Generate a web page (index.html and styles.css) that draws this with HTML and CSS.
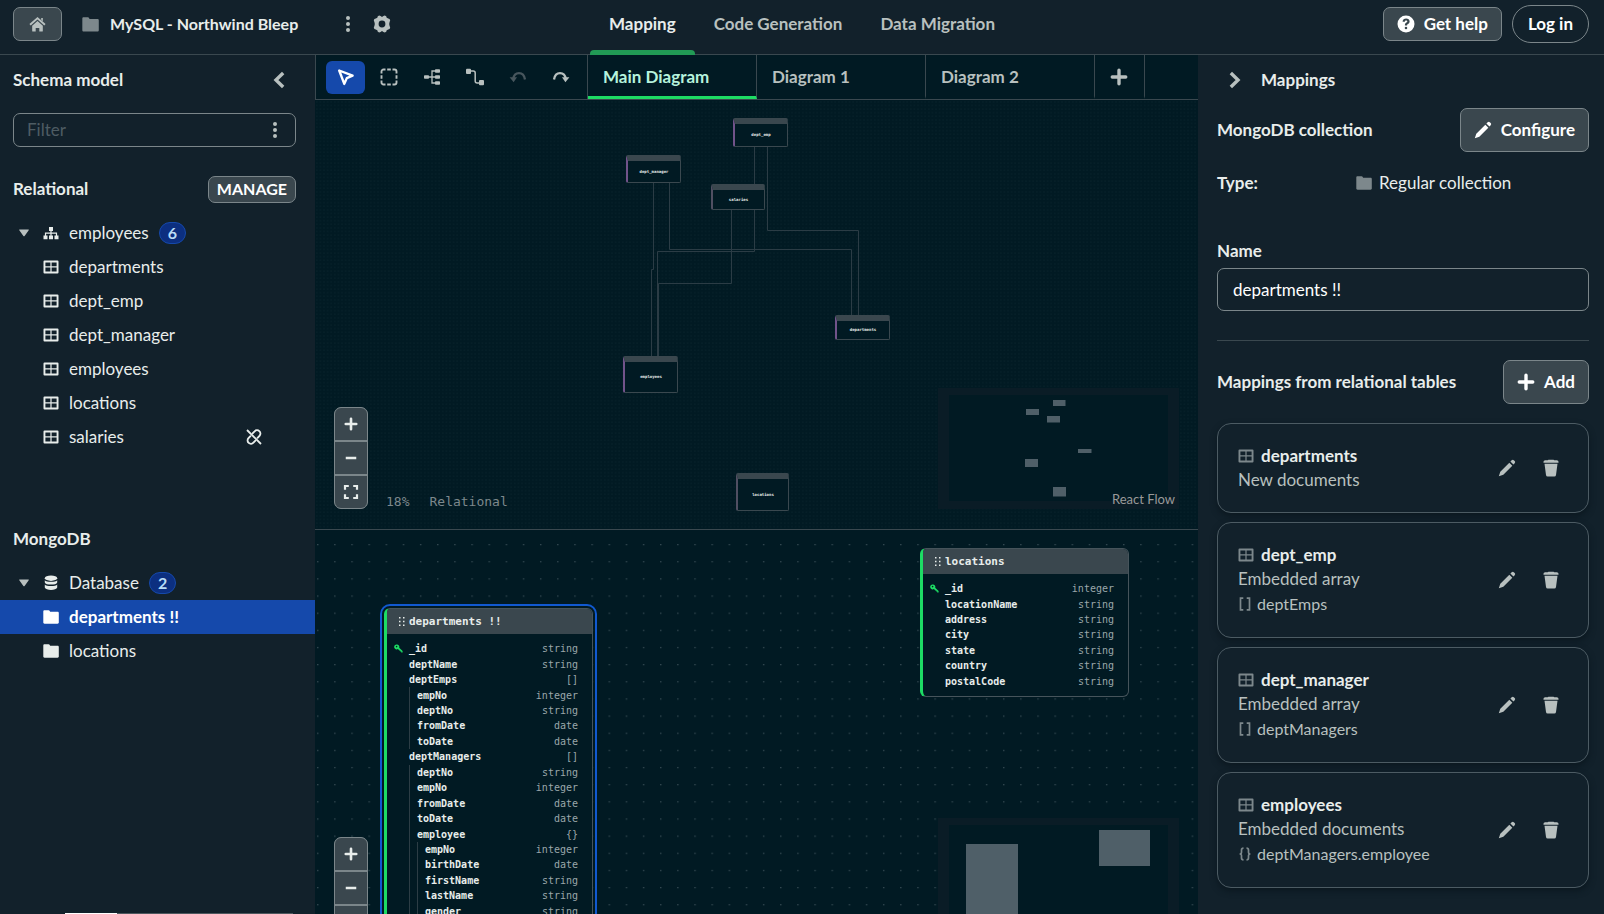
FILE: index.html
```html
<!DOCTYPE html>
<html lang="en">
<head>
<meta charset="utf-8">
<meta name="viewport" content="width=device-width, initial-scale=1">
<title>MySQL - Northwind Bleep</title>
<link rel="stylesheet" href="styles.css">
</head>
<body>
<svg class="sprite" aria-hidden="true">
  <symbol id="i-home" viewBox="0 0 16 16"><path d="M8 .9 15.6 7.6 14.4 9 8 3.4 1.6 9 .4 7.6z"/><path d="M8 4.8 13 9.1V14a.7.7 0 0 1-.7.7H9.7v-3.4H6.3v3.4H3.7A.7.7 0 0 1 3 14V9.100z"/><path d="M11.500 1.800H13V5L11.500 3.700z"/></symbol>
  <symbol id="i-folder" viewBox="0 0 16 14"><path d="M.3 1.400C.3.700.8.200 1.500.200H5.600c.5 0 .8.200 1 .6l.5 1H14.600c.7 0 1.200.500 1.200 1.200v9.500c0 .7-.5 1.200-1.200 1.200H1.500c-.7 0-1.200-.5-1.200-1.200z"/></symbol>
  <symbol id="i-kebab" viewBox="0 0 16 16"><circle cx="8" cy="2" r="2"/><circle cx="8" cy="8" r="2"/><circle cx="8" cy="14" r="2"/></symbol>
  <symbol id="i-gear" viewBox="0 0 18 18"><path fill-rule="evenodd" d="M6.200.5 7.600.9 9 1.900 10.400.9 11.800.5 13.200 1.200 13.700 2.800 15.200 3.500 16.600 4 17.200 5.500 16.600 7 16.200 9 16.600 11 17.200 12.500 16.600 14 15.200 14.500 13.700 15.200 13.200 16.800 11.800 17.500 10.400 17.100 9 16.100 7.600 17.100 6.200 17.500 4.800 16.800 4.300 15.200 2.800 14.500 1.400 14 .8 12.500 1.400 11 1.800 9 1.400 7 .8 5.500 1.400 4 2.800 3.500 4.300 2.800 4.800 1.200zM9 5.600a3.400 3.400 0 1 0 0 6.800 3.400 3.400 0 0 0 0-6.800z"/></symbol>
  <symbol id="i-help" viewBox="0 0 18 18"><path fill-rule="evenodd" d="M9 .5a8.500 8.500 0 1 0 0 17 8.500 8.500 0 0 0 0-17zM5.600 6.700C5.700 4.600 7.200 3.500 9.100 3.500c2 0 3.500 1.100 3.500 2.900 0 1.300-.7 2-1.500 2.500-.8.500-1 .7-1 1.300v.4H7.900v-.6c0-1.300.6-2 1.500-2.500.7-.4.9-.6.9-1.100S9.800 5.500 9.100 5.500c-.8 0-1.200.5-1.300 1.200zM9 11.700a1.300 1.300 0 1 1 0 2.600 1.300 1.300 0 0 1 0-2.600z"/></symbol>
  <symbol id="i-left" viewBox="0 0 16 16"><path d="M11.700 1.800 5.300 8l6.400 6.200" fill="none" stroke="currentColor" stroke-width="3"/></symbol>
  <symbol id="i-right" viewBox="0 0 16 16"><path d="M4.300 1.800 10.700 8l-6.400 6.200" fill="none" stroke="currentColor" stroke-width="3"/></symbol>
  <symbol id="i-caret" viewBox="0 0 10 8"><path d="M.4.600H9.600Q10 .8 9.700 1.200L5.600 6.900Q5 7.500 4.400 6.900L.3 1.200Q0 .8.4.600z"/></symbol>
  <symbol id="i-tree" viewBox="0 0 16 16"><path d="M6 2h4v4H6zM.5 10.500h4v3.700h-4zM6 10.500h4v3.700H6zM11.500 10.500h4v3.700h-4z"/><path d="M8 5v6M2.500 11V8.200h11V11" fill="none" stroke="currentColor" stroke-width="1.200"/></symbol>
  <symbol id="i-table" viewBox="0 0 16 14"><path fill-rule="evenodd" d="M1.500.500h13a1 1 0 0 1 1 1v11a1 1 0 0 1-1 1h-13a1 1 0 0 1-1-1v-11a1 1 0 0 1 1-1zM2.400 2.400v3.900h5V2.400zM8.600 2.400v3.900h5V2.400zM2.400 7.500v4h5v-4zM8.600 7.500v4h5v-4z"/></symbol>
  <symbol id="i-db" viewBox="0 0 14 16"><ellipse cx="7" cy="3.200" rx="6.200" ry="2.700"/><path d="M.8 5.200C2 7.200 12 7.200 13.200 5.200V7.400C12.500 10.300 1.500 10.300.8 7.400zM.8 9.400c1.200 2 11.200 2 12.400 0v3.200C12.500 15.800 1.500 15.800.8 12.600z"/></symbol>
  <symbol id="i-unlink" viewBox="0 0 16 16"><g fill="none" stroke="currentColor" stroke-width="1.900" stroke-linecap="round"><path d="M6.600 4.300 8.600 2.300a3.200 3.200 0 0 1 4.900 4.500L11.600 8.800"/><path d="M9.400 11.700 7.400 13.700a3.200 3.200 0 0 1-4.900-4.500L4.400 7.200"/></g><path d="M1 1 15 15" stroke="currentColor" stroke-width="1.800"/></symbol>
  <symbol id="i-cursor" viewBox="0 0 18 18"><path d="M2.200 2.500 15.600 7.600 9.800 10.100 7.300 15.900z" fill="none" stroke="currentColor" stroke-width="2.400" stroke-linejoin="round"/></symbol>
  <symbol id="i-marquee" viewBox="0 0 18 18"><path d="M1.500 5.500V3.500a2 2 0 0 1 2-2h2M12.500 1.500h2a2 2 0 0 1 2 2v2M16.500 12.500v2a2 2 0 0 1-2 2h-2M5.500 16.500h-2a2 2 0 0 1-2-2v-2M7.200 1.500h3.600M7.200 16.500h3.600M1.500 7.200v3.600M16.500 7.200v3.600" fill="none" stroke="currentColor" stroke-width="1.900"/></symbol>
  <symbol id="i-layout" viewBox="0 0 18 18"><rect x="1" y="7.200" width="5" height="3.600" rx=".8"/><rect x="12" y="1.200" width="5" height="3.600" rx=".8"/><rect x="12" y="7.200" width="5" height="3.600" rx=".8"/><rect x="12" y="13.200" width="5" height="3.600" rx=".8"/><path d="M6 9h6M12.500 3H9v12h3.500" fill="none" stroke="currentColor" stroke-width="1.300"/></symbol>
  <symbol id="i-route" viewBox="0 0 20 18"><rect x="1" y=".8" width="5" height="5.200" rx="1"/><rect x="14" y="12" width="5" height="5.200" rx="1"/><path d="M6 3h2.200a2 2 0 0 1 2 2v8a2 2 0 0 0 2 2H15" fill="none" stroke="currentColor" stroke-width="1.500"/></symbol>
  <symbol id="i-undo" viewBox="0 0 18 12"><path d="M4 8.500C4.700 4.200 7 2.200 10 2.200c3.300 0 5.300 2.200 6 6.300" fill="none" stroke="currentColor" stroke-width="2.300"/><path d="M.6 6.200H8L4.600 11.200z"/></symbol>
  <symbol id="i-plus" viewBox="0 0 16 16"><path d="M8 2v12M2 8h12" fill="none" stroke="currentColor" stroke-width="3" stroke-linecap="round"/></symbol>
  <symbol id="i-minus" viewBox="0 0 16 16"><path d="M2 8h12" fill="none" stroke="currentColor" stroke-width="3"/></symbol>
  <symbol id="i-fit" viewBox="0 0 16 16"><path d="M2 5.800V2h3.800M10.200 2H14v3.800M14 10.200V14h-3.800M5.800 14H2v-3.800" fill="none" stroke="currentColor" stroke-width="2.200"/></symbol>
  <symbol id="i-edit" viewBox="0 0 18 18"><path d="M11.300 3.700 14.300 6.700 5.300 15.700.8 17.200 2.300 12.700z"/><path d="M12.400 2.600 13.700 1.300Q14.900.300 16 1.400L16.700 2.100Q17.700 3.200 16.700 4.300L15.400 5.600z"/></symbol>
  <symbol id="i-trash" viewBox="0 0 16 18"><path d="M5.500.700h5q.6 0 .8.500h2.500q1.700 0 1.700 1.600V3.700H.5V2.800Q.5 1.200 2.200 1.200H4.700Q4.900.700 5.500.700zM1.500 4.800H14.500L13 15.900q-.2 1.500-1.700 1.500H4.700Q3.200 17.400 3 15.900z"/></symbol>
  <symbol id="i-grip" viewBox="0 0 6 10"><path d="M0 0h1.500v1.500H0zM4 0h1.500v1.500H4zM0 3.800h1.500v1.500H0zM4 3.800h1.500v1.500H4zM0 7.600h1.500v1.500H0zM4 7.600h1.500v1.500H4z"/></symbol>
  <symbol id="i-key" viewBox="0 0 9 9"><path fill-rule="evenodd" d="M2.900.500a2.400 2.400 0 0 1 2.300 3.200L8.600 6.900V8.500H7.200V7.500H6.200V6.500H5.200L4 5.100A2.500 2.500 0 1 1 2.900.500zM2.600 1.800a.8.800 0 1 0 0 1.600.8.800 0 0 0 0-1.600z"/></symbol>
  <symbol id="i-array" viewBox="0 0 12 14"><path d="M4.300 1.200H1.500v11.600h2.800M7.700 1.200h2.800v11.600H7.700" fill="none" stroke="currentColor" stroke-width="1.700"/></symbol>
  <symbol id="i-object" viewBox="0 0 12 14"><path d="M4.500 1.200Q2.500 1.200 2.500 3V5.300Q2.500 7 .6 7 2.500 7 2.500 8.700V11q0 1.800 2 1.800M7.500 1.200q2 0 2 1.800V5.300Q9.500 7 11.400 7 9.500 7 9.500 8.700V11q0 1.800-2 1.800" fill="none" stroke="currentColor" stroke-width="1.700"/></symbol>
</svg>

<div class="app">
  <header class="topbar">
    <div class="project">
      <button class="btn home" type="button" aria-label="Home"><svg class="i17"><use href="#i-home"/></svg></button>
      <svg class="i17 muted"><use href="#i-folder"/></svg>
      <h1 class="project-name">MySQL - Northwind Bleep</h1>
      <button class="icon-btn more" type="button" aria-label="Project menu"><svg class="i16"><use href="#i-kebab"/></svg></button>
      <button class="icon-btn" type="button" aria-label="Settings"><svg class="i18"><use href="#i-gear"/></svg></button>
    </div>
    <nav class="sections">
      <a class="section current" href="#mapping">Mapping</a>
      <a class="section" href="#code">Code Generation</a>
      <a class="section" href="#migration">Data Migration</a>
    </nav>
    <div class="account">
      <button class="btn help" type="button"><svg class="i18"><use href="#i-help"/></svg>Get help</button>
      <button class="btn login" type="button">Log in</button>
    </div>
  </header>

  <aside class="schema">
    <div class="schema-head">
      <h2 class="heading">Schema model</h2>
      <button class="icon-btn" type="button" aria-label="Collapse schema model"><svg class="i18"><use href="#i-left"/></svg></button>
    </div>
    <div class="filter">
      <input class="filter-input" type="text" placeholder="Filter" aria-label="Filter">
      <button class="icon-btn" type="button" aria-label="Filter options"><svg class="i16"><use href="#i-kebab"/></svg></button>
    </div>
    <div class="group-head">
      <h2 class="heading">Relational</h2>
      <button class="btn manage" type="button">MANAGE</button>
    </div>
    <ul class="tree">
      <li class="item"><svg class="caret"><use href="#i-caret"/></svg><svg class="i16"><use href="#i-tree"/></svg>employees<span class="badge">6</span></li>
      <li class="item leaf"><svg class="i16"><use href="#i-table"/></svg>departments</li>
      <li class="item leaf"><svg class="i16"><use href="#i-table"/></svg>dept_emp</li>
      <li class="item leaf"><svg class="i16"><use href="#i-table"/></svg>dept_manager</li>
      <li class="item leaf"><svg class="i16"><use href="#i-table"/></svg>employees</li>
      <li class="item leaf"><svg class="i16"><use href="#i-table"/></svg>locations</li>
      <li class="item leaf"><svg class="i16"><use href="#i-table"/></svg>salaries<svg class="i16 unlinked"><use href="#i-unlink"/></svg></li>
    </ul>
    <div class="group-head mongo">
      <h2 class="heading">MongoDB</h2>
    </div>
    <ul class="tree">
      <li class="item"><svg class="caret"><use href="#i-caret"/></svg><svg class="i16"><use href="#i-db"/></svg>Database<span class="badge">2</span></li>
      <li class="item leaf selected"><svg class="i16"><use href="#i-folder"/></svg>departments !!</li>
      <li class="item leaf"><svg class="i16"><use href="#i-folder"/></svg>locations</li>
    </ul>
    <div class="scroll-track"><div class="scroll-thumb"></div></div>
  </aside>

  <main class="workspace">
    <div class="toolbar">
      <div class="tools">
        <button class="tool active" type="button" aria-label="Select"><svg class="i18"><use href="#i-cursor"/></svg></button>
        <button class="tool" type="button" aria-label="Area select"><svg class="i18"><use href="#i-marquee"/></svg></button>
        <button class="tool" type="button" aria-label="Auto layout"><svg class="i18"><use href="#i-layout"/></svg></button>
        <button class="tool" type="button" aria-label="Edge style"><svg class="i20"><use href="#i-route"/></svg></button>
        <button class="tool" type="button" aria-label="Undo" disabled><svg class="i18"><use href="#i-undo"/></svg></button>
        <button class="tool" type="button" aria-label="Redo"><svg class="i18 flip"><use href="#i-undo"/></svg></button>
      </div>
      <div class="tabs" role="tablist">
        <button class="tab on" type="button" role="tab" aria-selected="true">Main Diagram</button>
        <button class="tab" type="button" role="tab">Diagram 1</button>
        <button class="tab" type="button" role="tab">Diagram 2</button>
        <button class="tab add" type="button" aria-label="Add diagram"><svg class="i18"><use href="#i-plus"/></svg></button>
      </div>
    </div>

    <section class="canvas" aria-label="Relational diagram">
      <svg class="grid" aria-hidden="true">
        <defs><pattern id="fine" width="3.6" height="3.6" patternUnits="userSpaceOnUse"><circle cx="1.800" cy="1.800" r=".45" fill="#142f38"/></pattern></defs>
        <rect width="100%" height="100%" fill="url(#fine)"/>
        <g fill="none" stroke="#2b3c45" stroke-width="1">
          <path d="M439.500 46V151.500H342.500V257"/>
          <path d="M452.500 46V130.500H543.500V216"/>
          <path d="M338.500 83V169.500H336.500V257"/>
          <path d="M354.500 83V149.500H536.500V216"/>
          <path d="M416.500 110V183.500H343.500V257"/>
        </g>
      </svg>
      <div class="mini dept-emp"><span>dept_emp</span></div>
      <div class="mini dept-manager"><span>dept_manager</span></div>
      <div class="mini salaries"><span>salaries</span></div>
      <div class="mini departments"><span>departments</span></div>
      <div class="mini employees"><span>employees</span></div>
      <div class="mini locations"><span>locations</span></div>
      <div class="hud">
        <div class="zoomer">
          <button class="zoom" type="button" aria-label="Zoom in"><svg class="i14"><use href="#i-plus"/></svg></button>
          <button class="zoom" type="button" aria-label="Zoom out"><svg class="i14"><use href="#i-minus"/></svg></button>
          <button class="zoom" type="button" aria-label="Fit view"><svg class="i16"><use href="#i-fit"/></svg></button>
        </div>
        <p class="status"><span>18%</span><span>Relational</span></p>
        <div class="minimap">
          <svg class="map" viewBox="0 0 241 121" aria-hidden="true">
            <path fill="#0a1c26" fill-rule="evenodd" d="M0 0H241V121H0zM11 7V113H230V7z"/>
            <g fill="#4f5f68"><path d="M115 12h12.500v6H115zM88 21h13v6H88zM109 28h13v6.500H109zM140 61h13.500v4H140zM87 71h13v8H87zM115 99h13v9.500H115z"/></g>
          </svg>
          <a class="credit" href="#reactflow">React Flow</a>
        </div>
      </div>
    </section>

    <section class="canvas" aria-label="MongoDB diagram">
      <svg class="grid" aria-hidden="true">
        <defs><pattern id="wide" x="2" y="14" width="17.150" height="17.150" patternUnits="userSpaceOnUse"><circle cx=".8" cy=".6" r=".6" fill="#51636b"/></pattern></defs>
        <rect width="100%" height="100%" fill="url(#wide)"/>
      </svg>
      <div class="hud">
        <div class="zoomer">
          <button class="zoom" type="button" aria-label="Zoom in"><svg class="i14"><use href="#i-plus"/></svg></button>
          <button class="zoom" type="button" aria-label="Zoom out"><svg class="i14"><use href="#i-minus"/></svg></button>
          <button class="zoom" type="button" aria-label="Fit view"><svg class="i16"><use href="#i-fit"/></svg></button>
        </div>
        <div class="minimap">
          <svg class="map" viewBox="0 0 241 121" aria-hidden="true">
            <path fill="#0a1c26" fill-rule="evenodd" d="M0 0H241V121H0zM11 7V113H230V7z"/>
            <path fill="#4f5f68" d="M28 26h52v87H28zM161 12h51v36H161z"/>
          </svg>
        </div>
      </div>
      <article class="node node-departments picked">
        <h3 class="node-head"><svg class="grip"><use href="#i-grip"/></svg>departments !!</h3>
        <dl class="fields">
          <div class="field"><svg class="key"><use href="#i-key"/></svg><dt>_id</dt><dd>string</dd></div>
          <div class="field"><dt>deptName</dt><dd>string</dd></div>
          <div class="field"><dt>deptEmps</dt><dd>[]</dd></div>
          <div class="field"><i class="guide"></i><dt>empNo</dt><dd>integer</dd></div>
          <div class="field"><i class="guide"></i><dt>deptNo</dt><dd>string</dd></div>
          <div class="field"><i class="guide"></i><dt>fromDate</dt><dd>date</dd></div>
          <div class="field"><i class="guide"></i><dt>toDate</dt><dd>date</dd></div>
          <div class="field"><dt>deptManagers</dt><dd>[]</dd></div>
          <div class="field"><i class="guide"></i><dt>deptNo</dt><dd>string</dd></div>
          <div class="field"><i class="guide"></i><dt>empNo</dt><dd>integer</dd></div>
          <div class="field"><i class="guide"></i><dt>fromDate</dt><dd>date</dd></div>
          <div class="field"><i class="guide"></i><dt>toDate</dt><dd>date</dd></div>
          <div class="field"><i class="guide"></i><dt>employee</dt><dd>{}</dd></div>
          <div class="field"><i class="guide"></i><i class="guide"></i><dt>empNo</dt><dd>integer</dd></div>
          <div class="field"><i class="guide"></i><i class="guide"></i><dt>birthDate</dt><dd>date</dd></div>
          <div class="field"><i class="guide"></i><i class="guide"></i><dt>firstName</dt><dd>string</dd></div>
          <div class="field"><i class="guide"></i><i class="guide"></i><dt>lastName</dt><dd>string</dd></div>
          <div class="field"><i class="guide"></i><i class="guide"></i><dt>gender</dt><dd>string</dd></div>
        </dl>
      </article>
      <article class="node node-locations">
        <h3 class="node-head"><svg class="grip"><use href="#i-grip"/></svg>locations</h3>
        <dl class="fields">
          <div class="field"><svg class="key"><use href="#i-key"/></svg><dt>_id</dt><dd>integer</dd></div>
          <div class="field"><dt>locationName</dt><dd>string</dd></div>
          <div class="field"><dt>address</dt><dd>string</dd></div>
          <div class="field"><dt>city</dt><dd>string</dd></div>
          <div class="field"><dt>state</dt><dd>string</dd></div>
          <div class="field"><dt>country</dt><dd>string</dd></div>
          <div class="field"><dt>postalCode</dt><dd>string</dd></div>
        </dl>
      </article>
    </section>
  </main>

  <aside class="details">
    <div class="details-head">
      <button class="icon-btn" type="button" aria-label="Collapse mappings"><svg class="i18"><use href="#i-right"/></svg></button>
      <h2 class="heading">Mappings</h2>
    </div>
    <div class="line">
      <h3 class="heading">MongoDB collection</h3>
      <button class="btn action" type="button"><svg class="i18"><use href="#i-edit"/></svg>Configure</button>
    </div>
    <div class="type-row">
      <strong class="heading">Type:</strong>
      <span class="type-value"><svg class="i16 muted"><use href="#i-folder"/></svg>Regular collection</span>
    </div>
    <label class="heading name-label" for="name">Name</label>
    <input class="name-input" id="name" type="text" value="departments !!">
    <hr class="rule">
    <div class="line">
      <h3 class="heading">Mappings from relational tables</h3>
      <button class="btn action" type="button"><svg class="i18"><use href="#i-plus"/></svg>Add</button>
    </div>
    <div class="cards">
      <article class="card">
        <div class="card-text">
          <h4 class="card-name"><svg class="i16 muted"><use href="#i-table"/></svg>departments</h4>
          <p class="card-kind">New documents</p>
        </div>
        <button class="icon-btn" type="button" aria-label="Edit departments"><svg class="i18"><use href="#i-edit"/></svg></button>
        <button class="icon-btn" type="button" aria-label="Delete departments"><svg class="i18"><use href="#i-trash"/></svg></button>
      </article>
      <article class="card">
        <div class="card-text">
          <h4 class="card-name"><svg class="i16 muted"><use href="#i-table"/></svg>dept_emp</h4>
          <p class="card-kind">Embedded array</p>
          <p class="card-path"><svg class="i14 muted"><use href="#i-array"/></svg>deptEmps</p>
        </div>
        <button class="icon-btn" type="button" aria-label="Edit dept_emp"><svg class="i18"><use href="#i-edit"/></svg></button>
        <button class="icon-btn" type="button" aria-label="Delete dept_emp"><svg class="i18"><use href="#i-trash"/></svg></button>
      </article>
      <article class="card">
        <div class="card-text">
          <h4 class="card-name"><svg class="i16 muted"><use href="#i-table"/></svg>dept_manager</h4>
          <p class="card-kind">Embedded array</p>
          <p class="card-path"><svg class="i14 muted"><use href="#i-array"/></svg>deptManagers</p>
        </div>
        <button class="icon-btn" type="button" aria-label="Edit dept_manager"><svg class="i18"><use href="#i-edit"/></svg></button>
        <button class="icon-btn" type="button" aria-label="Delete dept_manager"><svg class="i18"><use href="#i-trash"/></svg></button>
      </article>
      <article class="card">
        <div class="card-text">
          <h4 class="card-name"><svg class="i16 muted"><use href="#i-table"/></svg>employees</h4>
          <p class="card-kind">Embedded documents</p>
          <p class="card-path"><svg class="i14 muted"><use href="#i-object"/></svg>deptManagers.employee</p>
        </div>
        <button class="icon-btn" type="button" aria-label="Edit employees"><svg class="i18"><use href="#i-edit"/></svg></button>
        <button class="icon-btn" type="button" aria-label="Delete employees"><svg class="i18"><use href="#i-trash"/></svg></button>
      </article>
    </div>
  </aside>
</div>
</body>
</html>
```

FILE: styles.css
```css
:root {
  --panel: #12212b;
  --canvas: #011a23;
  --line: #3a484f;
  --edge: #7b868a;
  --fill: #3a474e;
  --text: #e8edeb;
  --soft: #b8c0bf;
  --dim: #7d888c;
  --green: #1ddc64;
  --blue: #1549ab;
  --sans: Lato, "Noto Sans", sans-serif;
  --mono: "DejaVu Sans Mono", "Liberation Mono", monospace;
}

* { box-sizing: border-box; margin: 0; padding: 0; }

body {
  background: var(--panel);
  color: var(--text);
  font: 400 17px/24px var(--sans);
}

button, input { font: inherit; color: inherit; }
button { cursor: pointer; background: none; border: 0; }
a { color: inherit; text-decoration: none; }
ul { list-style: none; }
svg { fill: currentColor; flex: none; display: block; }

.sprite { position: absolute; width: 0; height: 0; }
.i14 { width: 14px; height: 14px; }
.i16 { width: 16px; height: 16px; }
.i17 { width: 17px; height: 17px; }
.i18 { width: 18px; height: 18px; }
.i20 { width: 20px; height: 18px; }
.flip { transform: scaleX(-1); }
.muted { color: var(--dim); }

.app {
  display: grid;
  grid-template: 55px minmax(0, 1fr) / 315px minmax(0, 1fr) 406px;
  height: 100vh;
  overflow: hidden;
}

.heading { font-size: 17px; font-weight: 700; line-height: 24px; }

.btn {
  display: flex;
  align-items: center;
  justify-content: center;
  background: var(--fill);
  border: 1px solid var(--edge);
  border-radius: 7px;
  font-weight: 700;
}

.icon-btn {
  display: flex;
  align-items: center;
  justify-content: center;
  width: 34px;
  height: 34px;
  color: var(--soft);
}

/* Top bar */
.topbar {
  grid-column: 1 / -1;
  display: grid;
  grid-template-columns: 1fr auto 1fr;
  border-bottom: 1px solid var(--line);
}
.project { display: flex; align-items: center; width: 399px; padding: 0 0 6px 13px; }
.home { width: 49px; height: 34px; margin-right: 20px; color: var(--soft); }
.project-name { margin-left: 11px; font-size: 16px; font-weight: 700; line-height: 24px; }
.more { margin-left: auto; }
.sections { display: flex; }
.section {
  position: relative;
  padding: 12px 19px 0;
  font-weight: 700;
  color: var(--soft);
}
.section.current { color: var(--text); }
.section.current::after {
  content: "";
  position: absolute;
  inset: auto 0 -1px;
  height: 5px;
  background: #219a55;
  border-radius: 4px 4px 0 0;
}
.account { display: flex; align-items: center; justify-content: flex-end; gap: 10px; padding: 0 15px 6px 0; color: #fff; }
.help { gap: 9px; height: 34px; padding: 0 13px; }
.login { height: 38px; padding: 0 15px; background: none; border-radius: 19px; }

/* Schema panel */
.schema { display: flex; flex-direction: column; overflow: hidden; }
.schema-head { display: flex; align-items: center; justify-content: space-between; height: 50px; padding: 0 19px 0 13px; }
.filter {
  display: flex;
  align-items: center;
  height: 34px;
  margin: 8px 19px 0 13px;
  padding: 0 3px 0 13px;
  border: 1px solid var(--edge);
  border-radius: 7px;
}
.filter-input { flex: 1; min-width: 0; background: none; border: 0; outline: 0; }
.filter-input::placeholder { color: #4e5c63; opacity: 1; }
.group-head { display: flex; align-items: center; justify-content: space-between; height: 28px; margin: 28px 19px 0 13px; }
.group-head.mongo { margin-top: 71px; }
.manage { height: 27px; padding: 0 8px; color: #fff; font-size: 16px; }
.tree { margin-top: 13px; }
.item { display: flex; align-items: center; height: 34px; padding: 0 53px 0 19px; gap: 10px; }
.item .caret { width: 10px; height: 8px; margin-right: 4px; color: var(--soft); }
.item.leaf { padding-left: 43px; }
.item .unlinked { margin-left: auto; }
.item.selected { background: var(--blue); color: #fff; font-weight: 700; }
.badge {
  padding: 0 8px;
  border: 1px solid #1549ab;
  border-radius: 11px;
  background: #0c2f80;
  color: #b9dcf6;
  font-size: 16px;
  font-weight: 700;
  line-height: 20px;
}
.scroll-track { height: 1px; margin: auto 22px 0 65px; background: #4d585e; }
.scroll-thumb { width: 52px; height: 1px; background: #fff; }

/* Workspace */
.workspace {
  display: grid;
  grid-template-rows: 45px 430px 430px;
  background: var(--canvas);
  overflow: hidden;
}
.toolbar { display: flex; border: solid var(--line); border-width: 0 0 1px 1px; }
.tools { display: flex; align-items: center; gap: 4px; padding: 0 7px 0 10px; }
.tool {
  display: flex;
  align-items: center;
  justify-content: center;
  width: 39px;
  height: 33px;
  border-radius: 6px;
  color: var(--soft);
}
.tool.active { background: var(--blue); color: #fff; }
.tool:disabled { color: #47565d; }
.tabs { display: flex; border-left: 1px solid var(--line); }
.tab {
  width: 169px;
  padding: 3px 15px 0;
  border-right: 1px solid var(--line);
  border-bottom: 3px solid transparent;
  color: var(--soft);
  font-weight: 700;
  text-align: left;
}
.tab.on { border-bottom-color: var(--green); color: #b6f3dd; }
.tab.add { width: 50px; }

.canvas { position: relative; display: flex; border-bottom: 1px solid var(--line); overflow: hidden; }
.grid { position: absolute; inset: 0; width: 100%; height: 100%; }

.hud { display: flex; align-items: flex-end; flex: 1; padding: 0 19px 20px; z-index: 1; }
.zoomer {
  display: grid;
  gap: 2px;
  background: var(--edge);
  border: 1px solid var(--edge);
  border-radius: 7px;
  overflow: hidden;
}
.zoom { display: flex; align-items: center; justify-content: center; width: 32px; height: 32px; background: var(--fill); }
.status { display: flex; gap: 20px; padding: 0 18px; font: 400 13px/14px var(--mono); color: var(--dim); }
.minimap { position: relative; margin-left: auto; background: var(--canvas); }
.map { width: 241px; height: 121px; }
.credit { position: absolute; right: 4px; bottom: 1px; font-size: 13px; line-height: 18px; color: #999; }

.mini {
  position: absolute;
  display: flex;
  align-items: center;
  justify-content: center;
  width: 55px;
  background: var(--canvas);
  border: 1px solid var(--line);
  border-left: 2px solid #71538a;
  border-top: 6px solid var(--fill);
  border-radius: 2px;
  font: 700 4px/4px var(--mono);
}
.mini.dept-emp { left: 418px; top: 18px; height: 29px; }
.mini.dept-manager { left: 311px; top: 55px; height: 28px; }
.mini.salaries { left: 396px; top: 84px; height: 26px; width: 54px; }
.mini.departments { left: 520px; top: 215px; height: 25px; }
.mini.employees { left: 308px; top: 256px; height: 37px; }
.mini.locations { left: 421px; top: 373px; height: 38px; width: 53px; }
.mini.salaries, .mini.locations { border-left-color: #504f62; }

.node {
  position: absolute;
  width: 209px;
  background: var(--canvas);
  border: 1px solid #46545b;
  border-left: 3px solid var(--green);
  border-radius: 6px;
  font: 400 10px/15px var(--mono);
}
.node-departments { left: 69px; top: 78px; }
.node-locations { left: 605px; top: 18px; }
.picked { outline: 2px solid #1159d0; outline-offset: 2px; }
.node-head {
  display: flex;
  align-items: center;
  gap: 4px;
  height: 25px;
  padding: 0 12px;
  background: var(--fill);
  border-radius: 3px 5px 0 0;
  font-size: 11px;
  line-height: 16px;
}
.grip { width: 6px; height: 10px; }
/* Rows share the node's scaled height evenly. */
.fields { display: grid; grid-auto-rows: 1fr; height: 108px; margin: 7px 14px 7px 7px; }
.node-departments .fields { height: 278px; margin-bottom: 80px; }
.field { display: flex; align-items: center; padding-left: 15px; }
.field .key { width: 9px; height: 9px; margin: 0 6px 0 -15px; color: var(--green); }
.field dt { font-weight: 700; }
.field dd { margin-left: auto; color: #9ba7aa; }
.guide { align-self: stretch; width: 8px; border-left: 1px solid #2c3d45; }

/* Details panel */
.details { padding: 0 15px 0 19px; overflow: hidden; }
.details-head { display: flex; align-items: center; gap: 9px; height: 50px; padding-left: 1px; }
.line { display: flex; align-items: center; justify-content: space-between; height: 44px; margin-top: 3px; }
.action { gap: 9px; height: 44px; padding: 0 13px; color: #fff; font-size: 17px; }
.type-row { display: grid; grid-template-columns: 139px 1fr; margin-top: 19px; }
.type-value { display: flex; align-items: center; gap: 7px; }
.name-label { display: block; margin-top: 44px; }
.name-input {
  width: 100%;
  height: 43px;
  margin-top: 5px;
  padding: 0 15px;
  background: none;
  border: 1px solid var(--edge);
  border-radius: 7px;
  color: #fff;
}
.rule { margin: 29px 0 19px; border: 0; border-top: 1px solid var(--line); }
.cards { display: grid; gap: 9px; margin-top: 19px; }
.card {
  display: flex;
  align-items: center;
  gap: 10px;
  padding: 20px;
  border: 1px solid #4c5b63;
  border-radius: 14px;
  box-shadow: 0 3px 6px #0b1820;
}
.card-text { flex: 1; }
.card-name { display: flex; align-items: center; gap: 7px; font-size: 17px; font-weight: 700; line-height: 24px; }
.card-kind { color: var(--soft); }
.card-path { display: flex; align-items: center; gap: 5px; font-size: 16px; line-height: 26px; color: var(--soft); }
```
